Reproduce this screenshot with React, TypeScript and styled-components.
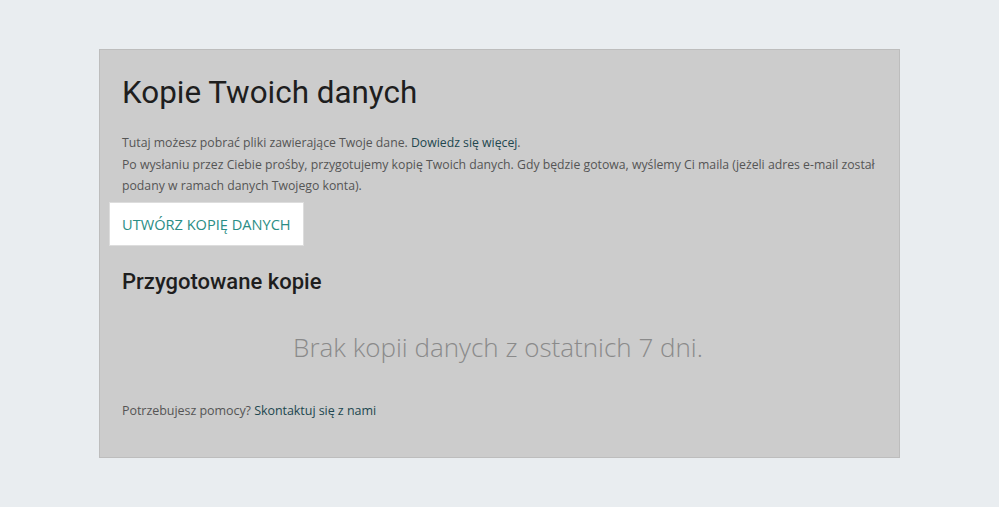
import React from 'react'
import styled, { createGlobalStyle } from 'styled-components'

const GlobalStyle = createGlobalStyle`
  html, body {
    margin: 0;
    padding: 0;
    background: #e9edf0;
  }
  body {
    font-family: 'Open Sans', 'Liberation Sans', sans-serif;
  }
`

const Page = styled.div`
  padding: 49px 99px 50px 99px;
`

const Card = styled.section`
  background: #cccccc;
  border: 1px solid #bdbdbd;
  padding: 21px 14px 36px 22px;
`

const Title = styled.h1`
  margin: 0 0 17px 0;
  font-family: Roboto, 'Liberation Sans', sans-serif;
  font-weight: 400;
  font-size: 31.4px;
  line-height: 44px;
  color: #1e1e1e;
`

const Paragraph = styled.p`
  margin: 0;
  font-size: 12.25px;
  line-height: 21.5px;
  color: #555555;
`

const Link = styled.a`
  color: #21474f;
  text-decoration: none;
`

const PrimaryButton = styled.button`
  display: inline-block;
  margin: 5px 0 0 -13px;
  padding: 0 12px;
  height: 44px;
  background: #ffffff;
  border: 1px solid #dddddd;
  font-family: 'Open Sans', 'Liberation Sans', sans-serif;
  font-size: 14.6px;
  color: #2a8d85;
  cursor: pointer;
`

const SubTitle = styled.h2`
  margin: 22px 0 0 0;
  font-family: Roboto, 'Liberation Sans', sans-serif;
  font-weight: 500;
  font-size: 22px;
  line-height: 28px;
  color: #1e1e1e;
`

const EmptyState = styled.div`
  margin: 33px 11px 0 0;
  text-align: center;
  font-weight: 300;
  font-size: 26px;
  line-height: 36px;
  color: #8a8a8a;
`

const Footer = styled.p`
  margin: 36px 0 0 0;
  font-size: 12.5px;
  letter-spacing: -0.05px;
  line-height: 20px;
  color: #555555;
`

const App = () => {
  return (
    <Page>
      <GlobalStyle />
      <Card>
        <Title>Kopie Twoich danych</Title>
        <Paragraph>
          Tutaj możesz pobrać pliki zawierające Twoje dane. <Link href="#">Dowiedz się więcej</Link>.
          <br />
          Po wysłaniu przez Ciebie prośby, przygotujemy kopię Twoich danych. Gdy będzie gotowa, wyślemy Ci maila
          (jeżeli adres e-mail został podany w ramach danych Twojego konta).
        </Paragraph>
        <PrimaryButton>UTWÓRZ KOPIĘ DANYCH</PrimaryButton>
        <SubTitle>Przygotowane kopie</SubTitle>
        <EmptyState>Brak kopii danych z ostatnich 7 dni.</EmptyState>
        <Footer>
          Potrzebujesz pomocy? <Link href="#">Skontaktuj się z nami</Link>
        </Footer>
      </Card>
    </Page>
  )
}

export default App
